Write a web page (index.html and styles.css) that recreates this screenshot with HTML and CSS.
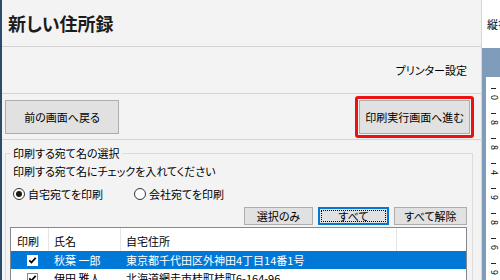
FILE: index.html
```html
<!DOCTYPE html>
<html lang="ja">
<head>
<meta charset="utf-8">
<title>新しい住所録</title>
<link rel="stylesheet" href="styles.css">
</head>
<body>
<div class="edge"></div>
<div class="dialog">
  <div class="head"><h1 class="title">新しい住所録</h1></div>
  <div class="toolbar"><span class="link">プリンター設定</span></div>
  <div class="nav">
    <button class="btn big">前の画面へ戻る</button>
    <div class="highlight"><button class="btn big fwd">印刷実行画面へ進む</button></div>
  </div>
  <fieldset class="group">
    <legend class="legend">印刷する宛て名の選択</legend>
    <div class="instr">印刷する宛て名にチェックを入れてください</div>
    <div class="radios">
      <label class="radio"><svg width="12" height="12" viewBox="0 0 12 12"><circle cx="6" cy="6" r="5.5" fill="#fff" stroke="#333"/><circle cx="6" cy="6" r="3" fill="#1a1a1a"/></svg>自宅宛てを印刷</label>
      <label class="radio r2"><svg width="12" height="12" viewBox="0 0 12 12"><circle cx="6" cy="6" r="5.5" fill="#fff" stroke="#333"/></svg>会社宛てを印刷</label>
    </div>
    <div class="actions">
      <button class="btn small w1">選択のみ</button>
      <button class="btn small w2 focus">すべて</button>
      <button class="btn small w3">すべて解除</button>
    </div>
    <div class="list">
      <div class="row header">
        <div class="cell c1">印刷</div>
        <div class="cell c2">氏名</div>
        <div class="cell c3">自宅住所</div>
      </div>
      <div class="row item selected">
        <div class="cell c1"><svg class="chk" width="11" height="11" viewBox="0 0 11 11"><rect x="0.5" y="0.5" width="10" height="10" fill="#fff" stroke="#fff"/><path d="M2.3 5.4 L4.4 7.6 L8.7 2.9" stroke="#000" stroke-width="1.7" fill="none"/></svg></div>
        <div class="cell c2">秋葉 一郎</div>
        <div class="cell c3">東京都千代田区外神田4丁目14番1号</div>
      </div>
      <div class="row item">
        <div class="cell c1"><svg class="chk" width="11" height="11" viewBox="0 0 11 11"><rect x="0.5" y="0.5" width="10" height="10" fill="#fff" stroke="#888"/><path d="M2.3 5.4 L4.4 7.6 L8.7 2.9" stroke="#000" stroke-width="1.7" fill="none"/></svg></div>
        <div class="cell c2">伊田 雅人</div>
        <div class="cell c3">北海道網走市桂町桂町6-164-96</div>
      </div>
    </div>
  </fieldset>
</div>
<div class="side">
  <div class="side-top">縦書き</div>
  <div class="side-blue">
    <div class="addr-col">
      <div class="unit"><i class="dash"></i><b class="dg">0</b></div>
      <div class="unit"><i class="dash"></i><b class="dg">8</b></div>
      <div class="unit"><i class="dash"></i><b class="dg">8</b></div>
      <div class="unit"><i class="dash"></i><b class="dg">4</b></div>
      <div class="unit"><i class="dash"></i><b class="dg">9</b></div>
      <div class="unit"><i class="dash"></i><b class="dg">8</b></div>
      <div class="unit"><i class="dash"></i><b class="dg">6</b></div>
      <div class="unit"><i class="dash"></i><b class="dg">9</b></div>
    </div>
  </div>
</div>
</body>
</html>
```
FILE: styles.css
```css
html, body {
  margin: 0;
  padding: 0;
}
body {
  width: 500px;
  height: 280px;
  overflow: hidden;
  display: flex;
  background: #f3f3f3;
  color: #000;
  font-family: "Noto Sans CJK JP", "Noto Sans", sans-serif;
  font-feature-settings: "palt";
  font-size: 11px;
}
.edge {
  flex: none;
  width: 2px;
  background: #2c4a6c;
}
.dialog {
  flex: none;
  width: 479px;
  display: flex;
  flex-direction: column;
  background: #f3f3f3;
  border-right: 1px solid #d6d6d6;
  overflow: hidden;
}
.dialog > * {
  flex: none;
}
.head {
  box-sizing: border-box;
  height: 47px;
  display: flex;
  align-items: center;
  padding-left: 6px;
  border-bottom: 1px solid #d4d4d4;
}
.title {
  margin: 0;
  font-size: 18px;
  font-weight: bold;
  color: #1c1c1c;
  line-height: 22px;
}
.toolbar {
  box-sizing: border-box;
  height: 47px;
  display: flex;
  align-items: center;
  justify-content: flex-end;
  padding-right: 14px;
  border-bottom: 1px solid #d4d4d4;
}
.link {
  line-height: 16px;
}
.nav {
  box-sizing: border-box;
  height: 46px;
  display: flex;
  align-items: center;
  justify-content: space-between;
  padding: 0 7px 0 3px;
  border-bottom: 1px solid #d4d4d4;
}
.btn {
  font: inherit;
  color: #000;
  background: #e1e1e1;
  border: 1px solid #adadad;
  border-radius: 0;
  padding: 0;
  margin: 0;
  box-sizing: border-box;
  display: flex;
  align-items: center;
  justify-content: center;
}
.big {
  width: 114px;
  height: 34px;
}
.highlight {
  border: 3px solid #ee1111;
  border-radius: 3px;
  padding: 1px;
}
.fwd {
  width: 111px;
}
.group {
  box-sizing: border-box;
  width: 468px;
  margin: 5px 0 0 3px;
  padding: 0 5px 0 4px;
  border: 1px solid #dcdcdc;
  min-width: 0;
}
.legend {
  padding: 0 2px;
  margin-left: 1px;
  line-height: 16px;
}
.instr {
  margin-top: 2px;
  padding-left: 3px;
  line-height: 16px;
}
.radios {
  margin-top: 6px;
  height: 18px;
  display: flex;
  align-items: center;
  padding-left: 3px;
}
.radio {
  display: flex;
  align-items: center;
  gap: 3px;
}
.r2 {
  margin-left: 31px;
}
.actions {
  margin-top: 4px;
  display: flex;
  justify-content: flex-end;
  gap: 5px;
}
.small {
  height: 18px;
}
.w1 { width: 69px; }
.w2 { width: 71px; }
.w3 { width: 73px; }
.focus {
  border-color: #0078d7;
  box-shadow: inset 0 0 0 1px #0078d7;
  outline: 1px dotted #000;
  outline-offset: -4px;
}
.list {
  margin-top: 2px;
  background: #fff;
  border: 1px solid #828790;
  height: 80px;
}
.row {
  display: grid;
  grid-template-columns: 38px 72px 276px;
}
.header .cell {
  box-sizing: border-box;
  padding-top: 3px;
  line-height: 20px;
  border-right: 1px solid #e5e5e5;
}
.cell.c1 { padding-left: 6px; }
.cell.c2 { padding-left: 5px; }
.cell.c3 { padding-left: 5px; }
.item {
  height: 18px;
  line-height: 18px;
}
.item .c1 {
  padding-left: 16px;
  display: flex;
  align-items: center;
}
.selected {
  background: #0078d7;
  color: #fff;
}
.chk {
  display: block;
}
.side {
  flex: 1;
  display: flex;
  flex-direction: column;
  background: #fff;
  overflow: hidden;
}
.side-top {
  flex: none;
  height: 48px;
  padding-left: 5px;
  display: flex;
  align-items: center;
  white-space: nowrap;
  font-size: 11px;
}
.side-blue {
  flex: 1;
  background: #7f9dbb;
  padding: 29px 0 0 4px;
  display: flex;
}
.addr-col {
  flex: 1;
  background: #fff;
  padding: 11px 0 0 5px;
}
.unit {
  height: 25px;
  display: flex;
  flex-direction: column;
  align-items: flex-start;
}
.dash {
  display: block;
  width: 5px;
  height: 1px;
  background: #222;
}
.dg {
  display: block;
  margin-top: 5px;
  font-weight: normal;
  font-size: 9px;
  line-height: 7px;
  width: 6px;
  text-align: center;
  transform: rotate(90deg);
}
```
